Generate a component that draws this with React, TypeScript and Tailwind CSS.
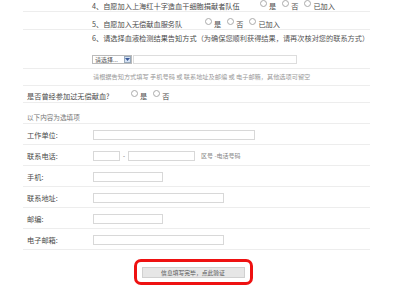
import React from "react";

const font = { fontFamily: '"Noto Sans CJK SC", "Noto Sans", sans-serif' };

const Radio = ({ label }: { label: string }) => (
  <span className="flex items-center gap-[2px] mr-[6px]">
    <span className="w-[7px] h-[7px] rounded-full border border-[#aaa] bg-white -mt-[5px]" />
    <span>{label}</span>
  </span>
);

const Field = ({ label, children }: { label: string; children?: React.ReactNode }) => (
  <div className="flex items-center h-[21px] pt-[1px] border-b border-[#ededed] box-border">
    <div className="w-[70px] pl-[4px] text-[7.2px] leading-[10px] text-[#4a4a4a]">{label}</div>
    <div className="flex items-center">{children}</div>
  </div>
);

const Input = ({ w }: { w: string }) => (
  <span className={`block h-[10px] border border-[#d8d8d8] bg-white ${w}`} />
);

export default function App() {
  return (
    <div className="w-[400px] h-[300px] bg-white overflow-hidden" style={font}>
      <div className="ml-[23px] w-[347px] text-[#4a4a4a]">
        {/* option 4 */}
        <div className="flex items-center h-[12px] border-b border-[#ededed] box-border pl-[69px] text-[7.2px] leading-[10px]">
          <span className="w-[168px]">4、自愿加入上海红十字造血干细胞捐献者队伍</span>
          <Radio label="是" />
          <Radio label="否" />
          <Radio label="已加入" />
        </div>
        {/* option 5 */}
        <div className="flex items-center h-[18px] pt-[7px] border-b border-[#ededed] box-border pl-[69px] text-[7.2px] leading-[10px]">
          <span className="w-[113px]">5、自愿加入无偿献血服务队</span>
          <Radio label="是" />
          <Radio label="否" />
          <Radio label="已加入" />
        </div>
        {/* option 6 */}
        <div className="pt-[3px] pb-[4px] border-b border-[#ededed] pl-[69px]">
          <div className="text-[7.2px] leading-[10px] whitespace-nowrap">
            6、请选择血液检测结果告知方式
            <span className="text-[#555]">（为确保您顺利获得结果，请再次核对您的联系方式）</span>
          </div>
          <div className="flex items-center mt-[12px] h-[9px]">
            <span className="flex items-center h-[9px] w-[40px] border border-[#bbb] bg-white text-[6px] leading-[7px] text-[#555] pl-[2px]">
              <span className="flex-1">请选择...</span>
              <span className="w-[7px] h-[7px] bg-[#d6e3f5] border border-[#9ab] flex items-center justify-center">
                <svg width="5" height="3" viewBox="0 0 5 3">
                  <path d="M0 0 L2.5 3 L5 0 Z" fill="#3a5a9a" />
                </svg>
              </span>
            </span>
            <span className="block ml-[1px] h-[9px] w-[164px] border border-[#ddd] bg-white" />
          </div>
        </div>
        {/* hint */}
        <div className="pt-[3px] pb-[3px] border-b border-[#ededed] pl-[70px] text-[6.2px] leading-[10px] text-[#999] whitespace-nowrap">
          请根据告知方式填写 手机号码 或 联系地址及邮编 或 电子邮箱，其他选项可留空
        </div>
        {/* question */}
        <div className="flex items-center pt-[5px] pb-[1px] border-b border-[#ededed] pl-[4px] text-[7.2px] leading-[10px]">
          <span className="w-[104px]">是否曾经参加过无偿献血?</span>
          <Radio label="是" />
          <Radio label="否" />
        </div>
        {/* optional */}
        <div className="pt-[9px] pb-[1px] border-b border-[#ededed] pl-[4px] text-[6.6px] leading-[10px] text-[#777]">
          以下内容为选填项
        </div>
        <Field label="工作单位:">
          <Input w="w-[162px]" />
        </Field>
        <Field label="联系电话:">
          <Input w="w-[27px]" />
          <span className="mx-[3px] text-[6px] text-[#555]">-</span>
          <Input w="w-[67px]" />
          <span className="ml-[6px] text-[6px] text-[#888]">区号 -电话号码</span>
        </Field>
        <Field label="手机:">
          <Input w="w-[70px]" />
        </Field>
        <Field label="联系地址:">
          <Input w="w-[131px]" />
        </Field>
        <Field label="邮编:">
          <Input w="w-[70px]" />
        </Field>
        <Field label="电子邮箱:">
          <Input w="w-[131px]" />
        </Field>
        {/* submit */}
        <div className="flex justify-center mt-[9px] pr-[7px]">
          <div className="w-[119px] h-[26px] border-[3px] border-[#ee1111] rounded-[7px] flex items-center justify-center">
            <button className="w-[103px] h-[11px] bg-[#e6e6e6] border border-[#d0d0d0] text-[5.8px] leading-[9px] text-[#555]">
              信息填写完毕，点此验证
            </button>
          </div>
        </div>
      </div>
    </div>
  );
}
